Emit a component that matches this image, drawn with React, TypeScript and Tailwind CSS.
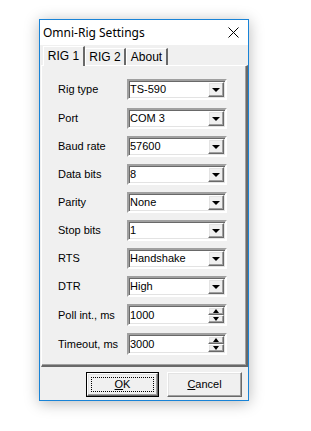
import React from 'react';

const rows: { label: string; value: string; spin?: boolean; extra?: boolean }[] = [
  { label: 'Rig type', value: 'TS-590' },
  { label: 'Port', value: 'COM 3', extra: true },
  { label: 'Baud rate', value: '57600' },
  { label: 'Data bits', value: '8' },
  { label: 'Parity', value: 'None' },
  { label: 'Stop bits', value: '1' },
  { label: 'RTS', value: 'Handshake' },
  { label: 'DTR', value: 'High' },
  { label: 'Poll int., ms', value: '1000', spin: true },
  { label: 'Timeout, ms', value: '3000', spin: true },
];

const raised =
  'border border-t-white border-l-white border-r-[#696969] border-b-[#696969] shadow-[inset_-1px_-1px_0_#a0a0a0,inset_1px_1px_0_#e3e3e3]';

const Field: React.FC<{ value: string; spin?: boolean }> = ({ value, spin }) => (
  <div className={`w-[100px] ${spin ? 'h-[22px]' : 'h-[21px]'} flex border-2 border-t-[#a0a0a0] border-l-[#a0a0a0] border-r-white border-b-white shadow-[inset_1px_1px_0_#696969,inset_-1px_-1px_0_#e3e3e3] bg-white`}>
    <div className="flex-1 flex items-center pl-[1px] leading-none">{value}</div>
    {spin ? (
      <div className="w-[16px] flex flex-col mr-[1px] my-[1px]">
        <div className={`flex-1 flex items-center justify-center bg-[#f0f0f0] ${raised}`}>
          <div className="w-0 h-0 border-l-[3.5px] border-r-[3.5px] border-b-[4px] border-l-transparent border-r-transparent border-b-black" />
        </div>
        <div className={`flex-1 flex items-center justify-center bg-[#f0f0f0] ${raised}`}>
          <div className="w-0 h-0 border-l-[3.5px] border-r-[3.5px] border-t-[4px] border-l-transparent border-r-transparent border-t-black" />
        </div>
      </div>
    ) : (
      <div className={`w-[16px] mr-[1px] my-[1px] flex items-center justify-center bg-[#f0f0f0] ${raised}`}>
        <div className="w-0 h-0 border-l-[4px] border-r-[4px] border-t-[4px] border-l-transparent border-r-transparent border-t-black" />
      </div>
    )}
  </div>
);

export default function App() {
  return (
    <div className="w-[311px] h-[431px] bg-white pt-[19px] pl-[39px] text-[11px] text-black" style={{ fontFamily: '"Liberation Sans", Arial, sans-serif' }}>
      <div className="w-[210px] h-[382px] border border-[#1883d7] flex flex-col shadow-[0_2px_14px_rgba(0,0,0,0.28)]">
        {/* title bar */}
        <div className="h-[25px] bg-white flex items-center justify-between pl-[3px] pr-[9px]">
          <span className="text-[12px] text-black" style={{ fontFamily: '"Noto Sans", "Open Sans", sans-serif' }}>
            Omni-Rig Settings
          </span>
          <svg width="11" height="11" viewBox="0 0 11 11">
            <path d="M0.5 0.5 L10.5 10.5 M10.5 0.5 L0.5 10.5" stroke="#000" strokeWidth="1" />
          </svg>
        </div>

        <div className="flex-1 bg-[#f0f0f0] flex flex-col">
          {/* tabs */}
          <div className="h-[20px] flex items-end pl-[3px] pt-[1px] text-[12px]">
            <div className="relative z-10 h-[20px] w-[42px] -mb-[1px] bg-[#f0f0f0] border-t border-l border-t-white border-l-white border-r-2 border-r-[#696969] flex items-center justify-center pb-[1px]">
              RIG 1
            </div>
            <div className="h-[17px] w-[41px] border-t border-l border-t-white border-l-white border-r-2 border-r-[#696969] flex items-center justify-center">
              RIG 2
            </div>
            <div className="h-[17px] w-[42px] border-t border-l border-t-white border-l-white border-r-2 border-r-[#696969] flex items-center justify-center">
              About
            </div>
          </div>

          {/* tab page */}
          <div className="ml-[1px] h-[302px] border-t border-l border-t-white border-l-white border-r-2 border-b-2 border-r-[#696969] border-b-[#696969] shadow-[inset_-1px_-1px_0_#a0a0a0] pt-[13px] pl-[16px] flex flex-col gap-[7px]">
            {rows.map((r) => (
              <div key={r.label} className={`flex items-center ${r.extra ? 'mt-[1px]' : ''}`}>
                <span className="w-[69px]">{r.label}</span>
                <Field value={r.value} spin={r.spin} />
              </div>
            ))}
          </div>

          {/* buttons */}
          <div className="flex justify-end gap-[8px] pr-[6px] mt-[5px]">
            <div className="w-[73px] h-[25px] border border-black">
              <div className={`w-full h-full bg-[#f0f0f0] ${raised} flex items-center justify-center`}>
                <div className="border border-dotted border-black w-[63px] h-[15px] flex items-center justify-center">
                  <span><span className="underline">O</span>K</span>
                </div>
              </div>
            </div>
            <div className={`w-[75px] h-[25px] bg-[#f0f0f0] ${raised} flex items-center justify-center`}>
              <span><span className="underline">C</span>ancel</span>
            </div>
          </div>
        </div>
      </div>
    </div>
  );
}
